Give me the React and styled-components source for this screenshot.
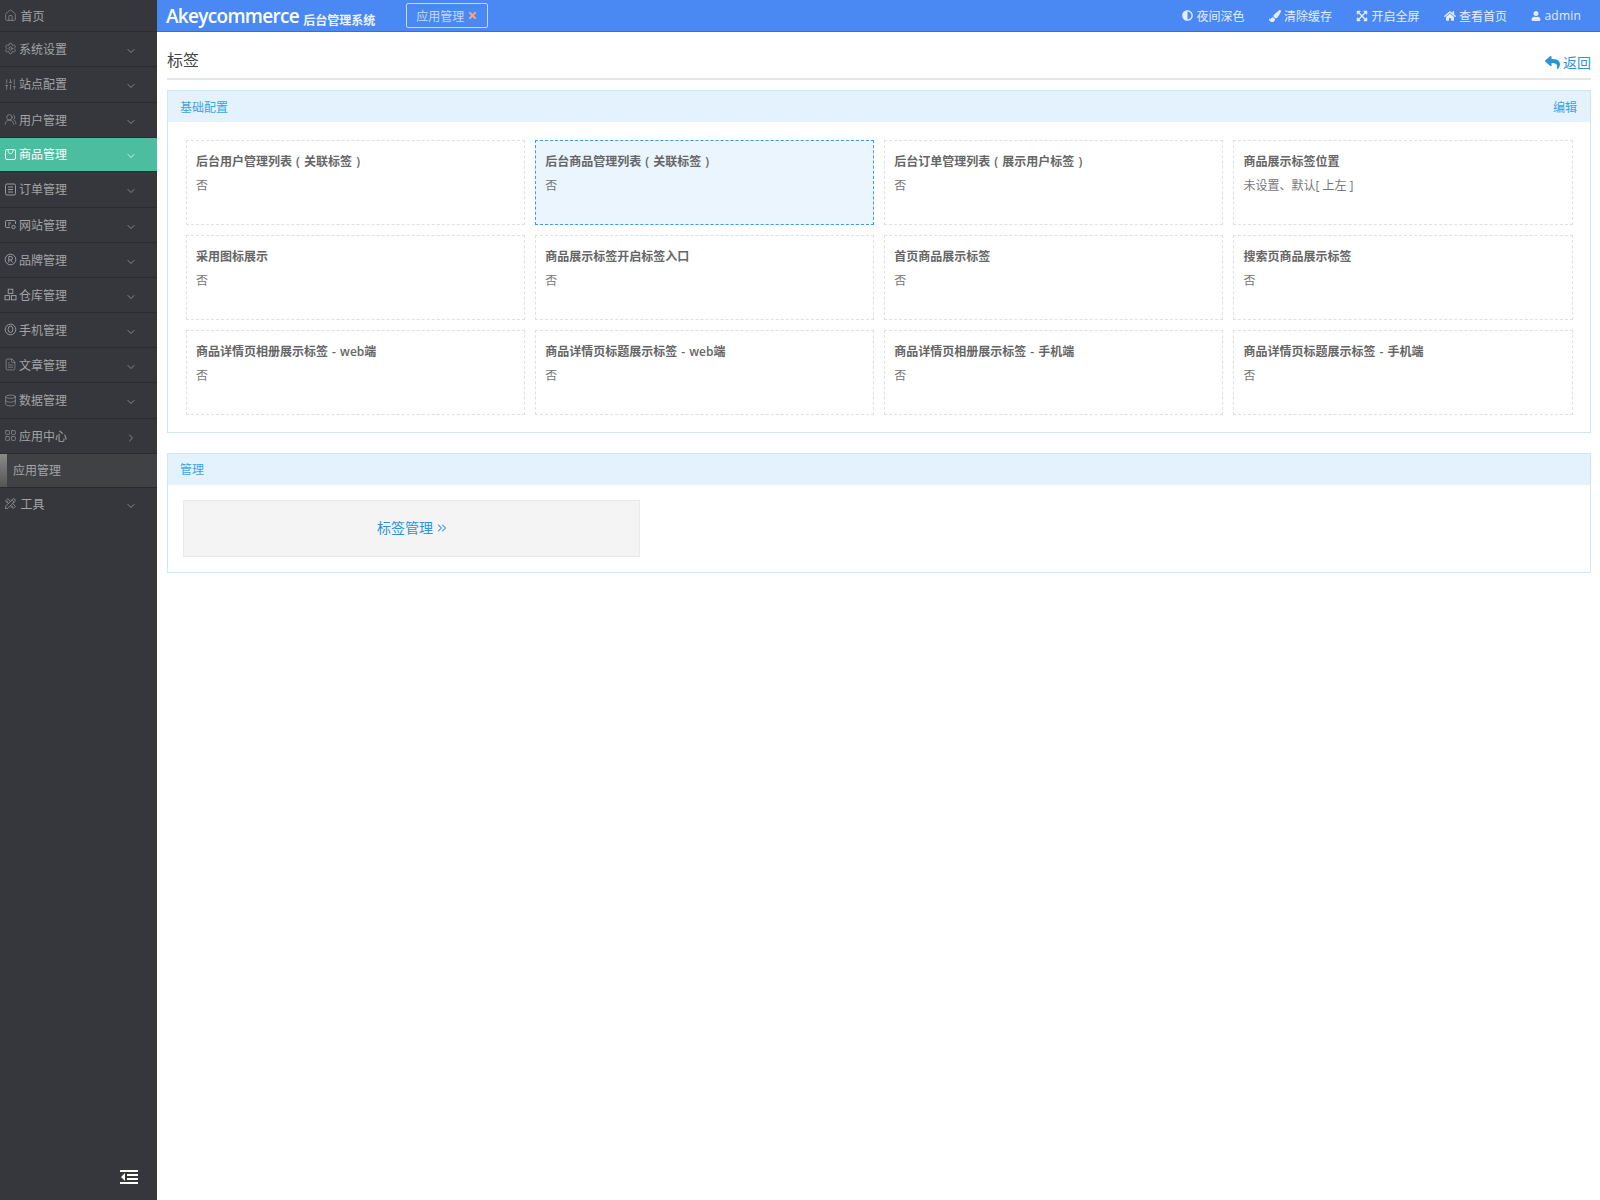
import React from 'react';
import styled, { createGlobalStyle } from 'styled-components';
import { Home, Settings, SlidersVertical, UsersRound, FileText, Database, LayoutGrid, ChevronDown, ChevronRight, ChevronsRight } from 'lucide-react';
import { TbTools } from 'react-icons/tb';
import { FaAdjust, FaPaintBrush, FaExpandArrowsAlt, FaHome, FaUser, FaReply, FaTimes } from 'react-icons/fa';

const Global = createGlobalStyle`
  html, body { margin: 0; padding: 0; background: #fff; }
  body { font-family: "Open Sans", "Noto Sans CJK SC", sans-serif; font-size: 12px; color: #666; }
  * { box-sizing: border-box; }
`;

const Page = styled.div`display: flex; width: 1600px; height: 1200px; overflow: hidden;`;
const Side = styled.aside`width: 157px; flex: none; background: #36373c; display: flex; flex-direction: column; position: relative;`;
const NavRow = styled.div`
  height: ${p => p.$h}px; display: flex; align-items: center; padding: 0 0 ${p => p.$first ? 0 : 1}px 4px; flex: none;
  border-bottom: 1px solid ${p => p.$plain ? 'transparent' : '#2b2c30'}; color: ${p => p.$active ? '#fff' : '#a3a4a7'};
  background: ${p => p.$active ? '#4dbd9f' : 'transparent'}; font-size: 12px;
  svg.ic { margin-right: ${p => p.$wide ? 3.5 : 2}px; flex: none; }
`;
const NavLabel = styled.span`flex: 1;`;
const Arrow = styled.span`display: flex; width: 12px; margin-right: 20px; position: relative; top: 2px;`;
const SubRow = styled.div`
  height: 34px; flex: none; background: #404145; color: #a3a4a7; font-size: 12px; display: flex; align-items: center;
  border-bottom: 1px solid #2b2c30; position: relative; padding: 0 0 1px 13px;
  &::before { content: ''; position: absolute; left: 0; top: 0; bottom: 0; width: 7px; background: linear-gradient(#8a8a8a, #555); }
`;
const Toggle = styled.svg`position: absolute; right: 18px; bottom: 15px;`;
const Right = styled.div`flex: 1; min-width: 0; display: flex; flex-direction: column;`;
const Header = styled.header`height: 32px; flex: none; background: #4a89f3; border-bottom: 1px solid #3a70c8; display: flex; align-items: center; color: #fff; padding-left: 9px;`;
const Brand = styled.span`font-size: 19px; font-weight: 600; letter-spacing: -0.7px; white-space: nowrap;`;
const BrandSub = styled.span`font-size: 12px; font-weight: 600; letter-spacing: 0; margin-left: 0; position: relative; top: 2px; color: #eef4fe;`;
const Tab = styled.div`height: 25px; margin-left: 31px; padding: 0 9px; border: 1px solid #c4d9fb; border-radius: 2px; display: flex; align-items: center; gap: 3px; color: #c4d9fb; font-size: 12px;`;
const TopLinks = styled.div`margin-left: auto; display: flex; align-items: center; gap: 24.5px; padding-right: 19px; color: #e4edfd; font-size: 12px;`;
const TopLink = styled.span`display: flex; align-items: center; gap: 3px; letter-spacing: ${p => p.$latin ? 0.2 : 0}px;`;
const Main = styled.main`padding: 0 9px 0 10px; flex: 1;`;
const TitleBar = styled.div`height: 48px; border-bottom: 2px solid #e6e6e6; display: flex; justify-content: space-between; align-items: flex-end;`;
const Title = styled.h1`margin: 0 0 7px; font-size: 16px; font-weight: 400; color: #444; line-height: 22px;`;
const Back = styled.a`display: flex; align-items: center; gap: 3px; color: #2d94d8; font-size: 14px; margin-bottom: 6px;`;
const Panel = styled.section`border: 1px solid #cfe8f8; margin-top: ${p => p.$mt}px; padding-bottom: ${p => p.$pb}px;`;
const PanelHead = styled.div`height: 31px; background: #e3f2fc; display: flex; justify-content: space-between; align-items: center; padding: 0 13px ${p => p.$nudge ? 2 : 0}px 12px; color: #3ba4e6; font-size: 12px;`;
const Grid = styled.div`display: grid; grid-template-columns: repeat(4, 1fr); gap: 10px; padding: 18px 17.5px 0 18px;`;
const Cell = styled.div`
  height: 85px; padding: 12px 9px; border: 1px dashed ${p => p.$hl ? '#3a9bef' : '#e0e0e0'};
  background: ${p => p.$hl ? '#eaf5fe' : '#fff'};
`;
const CellName = styled.div`font-size: 12px; font-weight: 600; line-height: 18px; color: #666; word-spacing: 1px;`;
const CellValue = styled.div`font-size: 12px; line-height: 18px; margin-top: 6px; color: #777;`;
const LinkBox = styled.div`width: 457px; height: 57px; margin: 15px 0 0 15px; padding: 0 0 3px 3px; background: #f4f4f4; border: 1px solid #eaeaea; color: #2d94d8; font-size: 14px; display: flex; align-items: center; justify-content: center; gap: 2px;
  svg { position: relative; top: 1px; }
`;

/* hand-drawn 13px line icons for glyphs the packages don't have */
const LineIcon = ({ children }) => (
  <svg className="ic" width="13" height="13" viewBox="0 0 13 13" fill="none" stroke="currentColor" strokeWidth="0.9">{children}</svg>
);
const BagIcon = () => <LineIcon><rect x="1.5" y="1.5" width="10" height="10" rx="1.5" /><path d="M4 1.5c0 3 1 4.2 2.5 4.2S9 4.5 9 1.5" /></LineIcon>;
const OrderIcon = () => <LineIcon><rect x="1.5" y="1" width="10" height="11" rx="1.5" /><path d="M4 4h5M4 6.5h5M4 9h5" /></LineIcon>;
const SiteIcon = () => <LineIcon><path d="M6 9.5H2.5a1 1 0 0 1-1-1v-5a1 1 0 0 1 1-1h8a1 1 0 0 1 1 1V6" /><path d="M4 5h3M4 7h2" /><circle cx="9.5" cy="9" r="1.7" /></LineIcon>;
const BrandIcon = () => <LineIcon><circle cx="6.5" cy="6.5" r="5.3" /><path d="M4.8 9.5v-6h2a1.7 1.7 0 0 1 0 3.4h-2M6.8 6.9l1.6 2.6" /></LineIcon>;
const StoreIcon = () => <LineIcon><rect x="4.2" y="1.2" width="4.6" height="4.2" /><rect x="1" y="7.6" width="4.6" height="4.2" /><rect x="7.4" y="7.6" width="4.6" height="4.2" /></LineIcon>;
const PhoneIcon = () => <LineIcon><circle cx="6.5" cy="6.5" r="5.3" /><ellipse cx="6.5" cy="6.3" rx="2.4" ry="3.2" /></LineIcon>;

const nav = [
  ['系统设置', Settings, 35], ['站点配置', SlidersVertical, 36], ['用户管理', UsersRound, 35], ['商品管理', BagIcon, 34, true],
  ['订单管理', OrderIcon, 36], ['网站管理', SiteIcon, 35], ['品牌管理', BrandIcon, 35], ['仓库管理', StoreIcon, 35],
  ['手机管理', PhoneIcon, 35], ['文章管理', FileText, 35], ['数据管理', Database, 36],
];
const cells = [
  ['后台用户管理列表 ( 关联标签 )', '否'], ['后台商品管理列表 ( 关联标签 )', '否', true], ['后台订单管理列表 ( 展示用户标签 )', '否'], ['商品展示标签位置', '未设置、默认[ 上左 ]'],
  ['采用图标展示', '否'], ['商品展示标签开启标签入口', '否'], ['首页商品展示标签', '否'], ['搜索页商品展示标签', '否'],
  ['商品详情页相册展示标签 - web端', '否'], ['商品详情页标题展示标签 - web端', '否'], ['商品详情页相册展示标签 - 手机端', '否'], ['商品详情页标题展示标签 - 手机端', '否'],
];
const Ic = ({ I }) => <I className="ic" size={13} strokeWidth={1.1} />;

export default function App() {
  return (
    <Page>
      <Global />
      <Side>
        <NavRow $h={32} $wide $first><Ic I={Home} /><NavLabel>首页</NavLabel></NavRow>
        {nav.map(([t, I, h, a]) => (
          <NavRow key={t} $h={h} $active={a}><Ic I={I} /><NavLabel>{t}</NavLabel><Arrow><ChevronDown size={12} strokeWidth={1.5} /></Arrow></NavRow>
        ))}
        <NavRow $h={35}><Ic I={LayoutGrid} /><NavLabel>应用中心</NavLabel><Arrow><ChevronRight size={12} strokeWidth={1.5} /></Arrow></NavRow>
        <SubRow>应用管理</SubRow>
        <NavRow $h={33} $wide $plain><TbTools className="ic" size={13} strokeWidth={1.3} /><NavLabel>工具</NavLabel><Arrow><ChevronDown size={12} strokeWidth={1.5} /></Arrow></NavRow>
        <Toggle width="20" height="16" viewBox="0 0 20 16" fill="#fff">
          <rect x="1" y="1" width="18" height="2" /><rect x="8" y="5" width="11" height="2" /><rect x="8" y="9" width="11" height="2" /><rect x="1" y="13" width="18" height="2" /><path d="M6 4v8L2 8z" />
        </Toggle>
      </Side>
      <Right>
        <Header>
          <Brand>Akeycommerce <BrandSub>后台管理系统</BrandSub></Brand>
          <Tab>应用管理 <FaTimes size={11} color="#f4a582" /></Tab>
          <TopLinks>
            <TopLink><FaAdjust size={11} />夜间深色</TopLink>
            <TopLink><FaPaintBrush size={12} />清除缓存</TopLink>
            <TopLink><FaExpandArrowsAlt size={12} />开启全屏</TopLink>
            <TopLink><FaHome size={12} />查看首页</TopLink>
            <TopLink $latin><FaUser size={10} />admin</TopLink>
          </TopLinks>
        </Header>
        <Main>
          <TitleBar><Title>标签</Title><Back><FaReply size={15} />返回</Back></TitleBar>
          <Panel $mt={10} $pb={17}>
            <PanelHead><span>基础配置</span><span>编辑</span></PanelHead>
            <Grid>
              {cells.map(([n, v, h]) => (
                <Cell key={n} $hl={h}><CellName>{n}</CellName><CellValue>{v}</CellValue></Cell>
              ))}
            </Grid>
          </Panel>
          <Panel $mt={20} $pb={15}>
            <PanelHead $nudge><span>管理</span></PanelHead>
            <LinkBox>标签管理 <ChevronsRight size={14} strokeWidth={1.8} /></LinkBox>
          </Panel>
        </Main>
      </Right>
    </Page>
  );
}
